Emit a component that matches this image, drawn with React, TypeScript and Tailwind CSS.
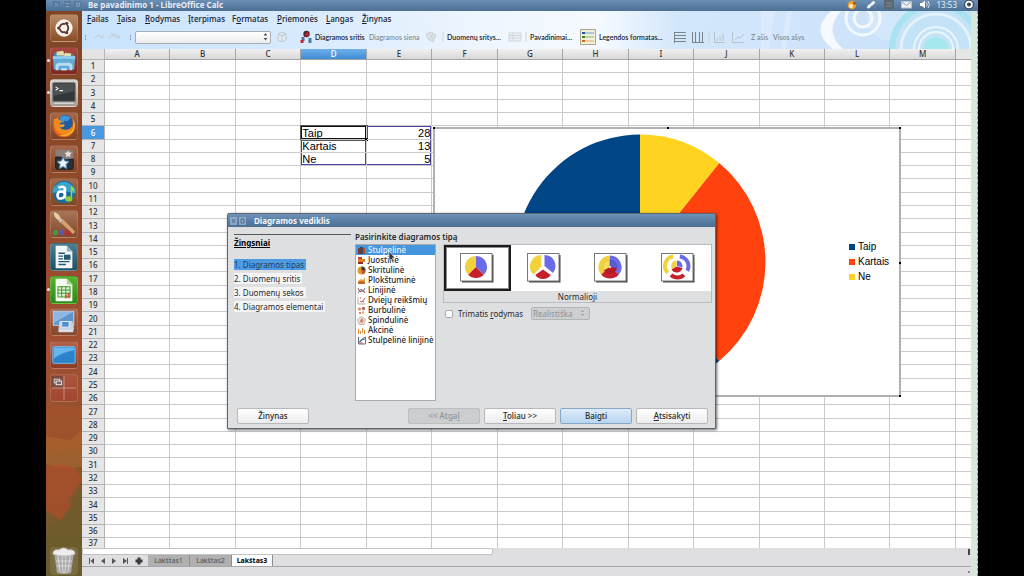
import React from "react";

const COLS = ["A", "B", "C", "D", "E", "F", "G", "H", "I", "J", "K", "L", "M"];
const ROWS = Array.from({ length: 37 }, (_, i) => i + 1);
const DATA: Record<string, string> = { D6: "Taip", E6: "28", D7: "Kartais", E7: "13", D8: "Ne", E8: "5" };

const CELL_MARK: Record<string, string> = {
  D6: "shadow-[inset_0_0_0_1px_#111,0_0_0_1px_#555]",
  D7: "shadow-[inset_1px_0_#4a43a0,inset_-1px_0_#4a43a0]",
  D8: "shadow-[inset_1px_0_#4a43a0,inset_-1px_0_#4a43a0,inset_0_-1px_#4a43a0]",
  E6: "shadow-[inset_-1px_0_#4a43a0,inset_0_1px_#4a43a0]",
  E7: "shadow-[inset_-1px_0_#4a43a0]",
  E8: "shadow-[inset_-1px_0_#4a43a0,inset_0_-1px_#4a43a0]",
};

function rowHeight(r: number) {
  if (r === ROWS.length) return "h-[11px]";
  return r % 7 === 3 || r % 7 === 6 ? "h-[14px]" : "h-[13px]";
}

function sector(cx: number, cy: number, r0: number, r1: number, a0: number, a1: number) {
  const p = (r: number, a: number) => {
    const t = (a * Math.PI) / 180;
    return `${(cx + r * Math.sin(t)).toFixed(2)} ${(cy - r * Math.cos(t)).toFixed(2)}`;
  };
  const large = a1 - a0 > 180 ? 1 : 0;
  const inner = r0 > 0 ? `L${p(r0, a1)}A${r0} ${r0} 0 ${large} 0 ${p(r0, a0)}` : `L${cx} ${cy}`;
  return `M${p(r1, a0)}A${r1} ${r1} 0 ${large} 1 ${p(r1, a1)}${inner}Z`;
}

/** Label with its access key underlined. */
function Key({ text, at }: { text: string; at: number }) {
  return (
    <>
      {text.slice(0, at)}
      <u>{text[at]}</u>
      {text.slice(at + 1)}
    </>
  );
}

/* ---------- launcher ---------- */

const launcher: { name: string; tile: string; running?: boolean; art: React.ReactNode }[] = [
  {
    name: "Dash",
    tile: "from-[#b98a66] to-[#8a4d25]",
    art: (
      <>
        <circle cx="14" cy="14" r="9.3" fill="#f6f1ee" />
        <circle cx="14" cy="14" r="4.6" fill="none" stroke="#5c3a2a" strokeWidth="2" />
        <path d="M14 14L7 14M14 14L17.5 20M14 14L17.5 8" stroke="#f6f1ee" strokeWidth="1.4" />
        <circle cx="8.3" cy="14" r="1.7" fill="#5c3a2a" />
        <circle cx="16.9" cy="9" r="1.7" fill="#5c3a2a" />
        <circle cx="16.9" cy="19" r="1.7" fill="#5c3a2a" />
      </>
    ),
  },
  {
    name: "Failai",
    tile: "from-[#a8483f] to-[#7c2a20]",
    running: true,
    art: (
      <>
        <path d="M3 5h7l2 2h13v6H3z" fill="#3f87b5" />
        <path d="M6 4l7-1 2 5H6zM15 5l7 1-1 4h-7z" fill="#e2dca8" />
        <path d="M2 9q12-1 24 0l-1 14q-11 2-22 0z" fill="#62abd8" />
        <path d="M2 9q12-1 24 0v3q-12-1-24 0z" fill="#8fcbea" />
        <path d="M5 24v-4q0-4 4-4h10q4 0 4 4v4h-3v-3q0-2-2-2h-8q-2 0-2 2v3z" fill="#b9dbee" />
        <path d="M11 22h6v2h-6z" fill="#d6ecf7" />
      </>
    ),
  },
  {
    name: "Terminalas",
    tile: "from-[#d9d3cd] to-[#a39a92]",
    running: true,
    art: (
      <>
        <rect x="2" y="3" width="24" height="20" rx="1" fill="#33373a" stroke="#6d6f70" />
        <path d="M3 4h22v8L3 17z" fill="#4b5053" />
        <path d="M5 7.500l2.500 1.700L5 11M9 11.500h4" stroke="#f3f3f3" strokeWidth="1.200" fill="none" />
        <path d="M3 25h22" stroke="#eee" />
      </>
    ),
  },
  {
    name: "Firefox",
    tile: "from-[#a5694a] to-[#814122]",
    art: (
      <>
        <circle cx="14" cy="14" r="12" fill="#e4601a" />
        <circle cx="15" cy="10.500" r="8.500" fill="#1f5c9e" />
        <path d="M10 4q6-3 11 1l-3 4-3-1-2 3-4-3z" fill="#3f95d6" />
        <path d="M3 6q2 1 4-1 1 3 5 4l-3 3q0 6 7 6 5 0 7-4-1 9-9 10Q2 22 3 6z" fill="#f08a1e" />
        <path d="M24 7q4 8-1 14-6 6-14 3 9 0 13-5 3-4 2-12z" fill="#f8b52c" />
        <path d="M8 13q4-2 7 0-1 3-5 2z" fill="#f8a52c" />
      </>
    ),
  },
  {
    name: "Stardict",
    tile: "from-[#a5694a] to-[#814122]",
    art: (
      <>
        <path d="M5 6q0-2 2-2h15q2 0 2 2v17q0 2-2 2H7q-2 0-2-2z" fill="#8d7d78" />
        <path d="M5 12q7-1 11 3l8-1v9q0 2-2 2H7q-2 0-2-2z" fill="#2b3036" stroke="#14181c" />
        <path d="M18.500 4.500l1.200 2.500 2.800.4-2 1.900.5 2.700-2.500-1.300-2.500 1.300.5-2.700-2-1.900 2.800-.4z" fill="#e6e0e0" />
        <path d="M13 12l1.900 4.100 4.500.6-3.300 3.100.8 4.500-3.900-2.200-3.900 2.200.8-4.500-3.300-3.100 4.500-.6z" fill="#e8f3fb" stroke="#5d93c4" />
      </>
    ),
  },
  {
    name: "Anki",
    tile: "from-[#a5694a] to-[#7a4a26]",
    art: (
      <>
        <circle cx="14" cy="14" r="12" fill="#156a9e" />
        <path d="M3 9q11-12 22 0 2 3 1 7-9-5-24-1-1-3 1-6z" fill="#3ba3cb" />
        <path d="M15 9v12M15 17q0-3.500-4-3.500T7 17.500t4 3.500 4-4M8 9.500q7-3 7 2" fill="none" stroke="#fff" strokeWidth="2.800" />
        <path d="M22 8v13" stroke="#9ad63e" strokeWidth="1.600" />
        <path d="M22 8q4 2 3 7-1-3-3-3z" fill="#9ad63e" />
        <ellipse cx="19" cy="21.500" rx="4" ry="3" fill="#8ccc3a" />
      </>
    ),
  },
  {
    name: "GIMP",
    tile: "from-[#a87458] to-[#84482a]",
    art: (
      <>
        <path d="M3 1q5 1 7 6l-2 3Q3 7 3 1z" fill="#e8cfa2" />
        <path d="M10 7l3 3-3 3-2-3z" fill="#c9c5c0" />
        <path d="M13 9l13 13-2 3-14-13z" fill="#d3a070" />
        <ellipse cx="5" cy="23.500" rx="2.800" ry="3" fill="#3f9a45" />
        <ellipse cx="11.500" cy="23" rx="2.400" ry="3" fill="#5a5cb4" />
        <ellipse cx="18" cy="23.500" rx="3" ry="2.800" fill="#c02a34" />
      </>
    ),
  },
  {
    name: "LibreOffice Writer",
    tile: "from-[#4b7f92] to-[#1d5064]",
    art: (
      <>
        <path d="M5 2h12l6 6v18H5z" fill="#f3f7f8" />
        <path d="M17 2l6 6h-6z" fill="#8db4c2" />
        <path d="M8 10h7M8 13h5M8 16h5M8 19h12M8 22h8" stroke="#255a70" strokeWidth="1.500" />
        <rect x="14" y="11.500" width="7" height="5.500" fill="#255a70" />
      </>
    ),
  },
  {
    name: "LibreOffice Calc",
    tile: "from-[#57b52f] to-[#2b8a15]",
    running: true,
    art: (
      <>
        <path d="M5 2h12l6 6v18H5z" fill="#f5faf2" />
        <path d="M17 2l6 6h-6z" fill="#a6d594" />
        <rect x="7.500" y="10.500" width="13" height="11" fill="#ddefd6" stroke="#3a9424" />
        <path d="M7 14h14M7 17.500h14M11.500 10v12M16 10v12" stroke="#3a9424" />
        <path d="M15 23v-4h2v4M18 23v-6h2v6" fill="#c2562f" />
      </>
    ),
  },
  {
    name: "Remmina",
    tile: "from-[#b06a52] to-[#87452b]",
    art: (
      <>
        <rect x="2.500" y="2.500" width="22" height="15" fill="#5e94cd" stroke="#c8d8e8" />
        <path d="M3 3h21L3 15z" fill="#8bb7e2" />
        <path d="M9 13h14l2 9q-8 3-17 0z" fill="#c4d4e4" />
        <rect x="11.500" y="13.500" width="8" height="6" fill="#4f8ecb" stroke="#e4edf5" />
        <path d="M8 22h16v3H8z" fill="#d8dfe6" />
      </>
    ),
  },
  {
    name: "Darbalaukis",
    tile: "from-[#b5614b] to-[#8a3b26]",
    art: (
      <>
        <rect x="2" y="5" width="24" height="18" rx="1" fill="#2b84cb" stroke="#7cc0ee" />
        <path d="M3 6h22v3Q12 11 3 18z" fill="#67b6ec" />
      </>
    ),
  },
  {
    name: "Darbo sritys",
    tile: "from-[#a9553e] to-[#a24531]",
    art: (
      <>
        <rect x="0" y="1" width="13" height="13" fill="#7d4a40" />
        <path d="M14 1v26M1 14h26" stroke="#d8a99b" strokeWidth=".8" />
        <rect x="3.500" y="4.500" width="6" height="4" fill="none" stroke="#ddd" />
        <rect x="5.500" y="6.500" width="6" height="4" fill="#746a68" stroke="#eee" />
      </>
    ),
  },
];

function Launcher() {
  return (
    <nav
      aria-label="Launcher"
      className="relative flex w-9 shrink-0 flex-col items-center justify-between overflow-hidden bg-gradient-to-b from-[#7d4526] via-[#a34f2f] via-60% to-[#6b5a2c] pt-[3px] pb-px"
    >
      <svg className="absolute inset-0 h-full w-full" viewBox="0 0 36 566" preserveAspectRatio="none" aria-hidden="true">
        <path d="M0 392q20 6 36 4v40q-20 8-36 2z" fill="#b0502c" opacity=".45" />
        <path d="M0 426l24 4 12-10v36q-18 4-36-2z" fill="#b56d2e" opacity=".45" />
        <path d="M0 456q20-3 30 2l6 12-14 20 4 6-12 14-14-10z" fill="#bb4a2a" opacity=".55" />
        <path d="M36 476v90H0v-46q18-8 24-24z" fill="#675d2b" opacity=".5" />
      </svg>
      <ul className="relative flex h-[388px] flex-col justify-between">
        {launcher.map((l) => (
          <li key={l.name} className="relative">
            {l.running && <span className="absolute top-3 -left-[3px] h-[3px] w-[3px] rounded-full bg-[#f3e6de]" />}
            <button
              type="button"
              aria-label={l.name}
              className={`block h-7 w-7 rounded-sm border border-white/15 bg-gradient-to-b ${l.tile}`}
            >
              <svg viewBox="0 0 28 28" className="h-full w-full">
                {l.art}
              </svg>
            </button>
          </li>
        ))}
      </ul>
      <button type="button" aria-label="Šiukšlinė" className="relative h-7 w-7 rounded-sm bg-white/10">
        <svg viewBox="0 0 28 28" className="h-full w-full">
          <path d="M4 5h20l-3 21q-7 2-14 0z" fill="#a9a9a9" />
          <path d="M8 9l2 16M12 9l1 17M16 9l-1 17M20 9l-2 16M6 14h16M7 19h14" stroke="#e3e3e3" strokeWidth=".8" />
          <path d="M3 7q0-5 6-4 5-4 9 0 7-1 7 4-11 4-22 0z" fill="#eeeeee" stroke="#c5c5c5" />
        </svg>
      </button>
    </nav>
  );
}

/* ---------- title bar, menu, toolbar ---------- */

function TitleBar() {
  return (
    <header className="flex h-[11px] shrink-0 items-start gap-1 bg-gradient-to-b from-[#6c90b6] to-[#4c6f92] pr-1 pl-[6px] text-[#e4edf6]">
      <svg viewBox="0 0 32 10" className="h-[10px] w-8 text-[#86a3c2]" aria-hidden="true">
        <path d="M1 1h7v7H1zM12 1h7v7h-7zM22 1h7v7h-7z" fill="#58799d" />
        <path d="M3 3l3 3M6 3L3 6M13.500 3.500h4M13.500 6.500h4M24.500 3h3v3h-3z" stroke="currentColor" fill="none" />
      </svg>
      <h1 className="flex-1 text-[8px] leading-[9px] font-bold whitespace-nowrap">Be pavadinimo 1 - LibreOffice Calc</h1>
      <div className="flex items-start gap-[7px]">
        <svg viewBox="0 0 12 10" className="h-[10px] w-3">
          <circle cx="6" cy="5" r="4.300" fill="#e8a02c" />
          <circle cx="5" cy="6" r="2.200" fill="#f7e3b4" />
          <path d="M7 2l4 1-3 2z" fill="#7b4310" />
        </svg>
        <svg viewBox="0 0 12 10" className="h-[10px] w-3">
          <path d="M3.500 7l1.500-1.500M7 4l1.500-1.500" stroke="#f2f5f8" strokeWidth="3" strokeLinecap="round" />
        </svg>
        <svg viewBox="0 0 10 10" className="h-[10px] w-[10px]">
          <rect width="10" height="9" fill="#5b6670" />
          <path d="M2 3h6M2 6h6" stroke="#7f8c98" />
        </svg>
        <svg viewBox="0 0 11 10" className="h-[10px] w-[11px]">
          <rect x="0.500" y="1.500" width="10" height="6.500" fill="#eef1f4" stroke="#b9c3cd" />
          <path d="M1 2l4.500 3.500L10 2" stroke="#8e9dab" fill="none" />
        </svg>
        <svg viewBox="0 0 11 10" className="h-[10px] w-[11px]">
          <path d="M1 3h2L6 .5v8L3 6H1z" fill="#fff" />
          <path d="M7.500 2.500q1.500 2 0 4M9 1q3 3.500 0 7" stroke="#dfe7ee" fill="none" />
        </svg>
        <time className="text-[8px] leading-[9px]">13:53</time>
        <svg viewBox="0 0 11 11" className="h-[10px] w-[10px]">
          <circle cx="5.500" cy="5" r="5.400" fill="#37475a" />
          <circle cx="5.500" cy="5" r="3.200" fill="none" stroke="#fff" strokeWidth="2" />
        </svg>
      </div>
    </header>
  );
}

const MENU: [string, number, string][] = [
  ["Failas", 0, "w-[30px]"],
  ["Taisa", 0, "w-7"],
  ["Rodymas", 0, "w-[43px]"],
  ["Įterpimas", 0, "w-11"],
  ["Formatas", 1, "w-[45px]"],
  ["Priemonės", 0, "w-[49px]"],
  ["Langas", 0, "w-9"],
  ["Žinynas", 0, "w-10"],
];

function ToolText({ w, off, children }: { w: string; off?: boolean; children: React.ReactNode }) {
  return (
    <button
      type="button"
      disabled={off}
      className={`shrink-0 text-left font-['Lato','Noto_Sans',sans-serif] text-[7px] leading-[10px] whitespace-nowrap ${w} ${off ? "font-medium text-[#7d858c]" : "font-semibold text-[#1d2228]"}`}
    >
      {children}
    </button>
  );
}

function Toolbar() {
  return (
    <div role="toolbar" aria-label="Diagrama" className="flex h-[22px] items-center pb-[2px] pl-[3px]">
      <svg viewBox="0 0 50 14" className="h-[14px] w-[50px] shrink-0" aria-hidden="true">
        <path d="M0 6h1M0 9h1M45 6h1M45 9h1" stroke="#56606b" />
        <path d="M10 8q3-5 7 0M18 5v3h-3M31 8q-3-5-7 0M26 4q6 0 8 4M34 5v3h-3" stroke="#c3ccd6" fill="none" strokeWidth="1.200" />
      </svg>
      <select aria-label="Diagramos elementas" className="h-[13px] w-[136px] shrink-0 appearance-none rounded-xs border border-[#a6adb4] bg-gradient-to-b from-white to-[#ececec] text-[7px]">
        <option></option>
      </select>
      <svg viewBox="0 0 8 10" className="pointer-events-none -ml-2 h-[10px] w-2 shrink-0" aria-hidden="true">
        <path d="M.5 3.500h4L2.500 1zM.5 6h4l-2 2.500z" fill="#555" />
      </svg>
      <button type="button" aria-label="Formatuoti" disabled className="w-[27px] shrink-0 pl-[5px]">
        <svg viewBox="0 0 12 12" className="h-3 w-3">
          <path d="M2 3l4-2 4 2v6l-4 2-4-2zM2 3l4 2 4-2M6 5v6" fill="#e3e9ef" stroke="#c0c8d0" />
        </svg>
      </button>
      <svg viewBox="0 0 14 14" className="h-[14px] w-[17px] shrink-0" aria-hidden="true">
        <path d="M2 11V7h3v4z" fill="#5b6f96" />
        <circle cx="7" cy="4" r="3.200" fill="#53222a" />
        <path d="M5 4l3-2 2 3-2 2z" fill="#b02d34" />
        <path d="M1 10h3v3H1z" fill="#c22b32" />
        <path d="M9 8h3v5H9z" fill="#4c79a8" />
      </svg>
      <ToolText w="w-[54px]">Diagramos sritis</ToolText>
      <ToolText w="w-[56px]" off>Diagramos siena</ToolText>
      <svg viewBox="0 0 22 12" className="h-3 w-[22px] shrink-0" aria-hidden="true">
        <path d="M1 3l5-2 5 3-3 7-5-3z" fill="#dde2e7" stroke="#c9d0d7" />
        <path d="M4 3l4 5M8 3L5 8" stroke="#c9d0d7" />
        <path d="M18 1v10" stroke="#ccd3da" />
      </svg>
      <ToolText w="w-[61px]">Duomenų sritys...</ToolText>
      <svg viewBox="0 0 22 12" className="h-3 w-[22px] shrink-0" aria-hidden="true">
        <path d="M1 2h12v8H1zM1 4.500h12M5 2v8M1 7h12" fill="#edf1f4" stroke="#ced5db" />
        <path d="M18 1v10" stroke="#ccd3da" />
      </svg>
      <ToolText w="w-[50px]">Pavadinimai...</ToolText>
      <button type="button" aria-label="Legenda" className="mr-[3px] h-4 w-4 shrink-0 border border-[#aba792] bg-[#f2efdb]">
        <svg viewBox="0 0 14 14" className="h-full w-full">
          <path d="M3 3h10" stroke="#6f98cc" />
          <path d="M3 7h10" stroke="#7fbb6c" />
          <path d="M3 11h10" stroke="#e8a868" />
          <path d="M1 2h3v2H1z" fill="#23549b" />
          <path d="M1 6h3v2H1z" fill="#3c8c26" />
          <path d="M1 10h3v2H1z" fill="#d06a1e" />
        </svg>
      </button>
      <ToolText w="w-[74px]">Legendos formatas...</ToolText>
      <svg viewBox="0 0 78 14" className="h-[14px] w-[78px] shrink-0" fill="none" aria-hidden="true">
        <path d="M1.500 2v11M1 2.500h12M1 5.500h12M1 8.500h12M1 11.500h12" stroke="#7b838b" />
        <path d="M19 12.500h12M19.500 2v10M22.500 2v10M26.500 2v10M29.500 2v10" stroke="#7b838b" />
        <path d="M36 1v12" stroke="#ccd3da" />
        <path d="M41.500 2v10.500h10M44 11V8M47 11V6M50 11V4M59.500 2v10.500h12M62 10l3-3 2 1 4-4" stroke="#b8c0c8" />
      </svg>
      <ToolText w="w-[22px]" off>Z ašis</ToolText>
      <ToolText w="w-10" off>Visos ašys</ToolText>
    </div>
  );
}

function Head() {
  return (
    <div className="relative h-[38px] shrink-0 overflow-hidden bg-[linear-gradient(90deg,#c9e3fd_0%,#d8eafd_25%,#eef6fe_45%,#f6faff_58%,#d3e7fb_67%,#cfe4fb_85%,#c3e0f8_100%)] text-[#17202a]">
      <svg className="absolute top-0 right-0 h-full w-[210px]" viewBox="0 0 210 38" fill="none" aria-hidden="true">
        <path d="M0 0h14L8 38H0zM26 0h5l-6 38h-5z" fill="#dbeafc" />
        <path d="M70 0q-22 20 2 38h10q-20-18-2-38z" fill="#fff" opacity=".8" />
        <circle cx="130" cy="6" r="24" fill="#deeefc" opacity=".5" />
        <circle cx="102" cy="7" r="17" stroke="#f3f9ff" strokeWidth="3" />
        <circle cx="102" cy="7" r="9" stroke="#f3f9ff" strokeWidth="3" />
        <circle cx="175" cy="38" r="44" fill="#c4e3f7" stroke="#a9e2f0" strokeWidth="6" />
        <circle cx="175" cy="38" r="35" stroke="#e3f3fd" strokeWidth="3" />
        <circle cx="175" cy="38" r="22" stroke="#e9f7fd" strokeWidth="2" />
        <circle cx="175" cy="38" r="17" stroke="#e9f7fd" strokeWidth="2" />
        <circle cx="175" cy="38" r="12" fill="#a5e8ee" />
      </svg>
      <div className="relative">
        <nav aria-label="Meniu" className="flex h-4 items-center pl-[5px]">
          {MENU.map(([t, i, w]) => (
            <button key={t} type="button" className={`text-left text-[8px] leading-[12px] font-medium whitespace-nowrap ${w}`}>
              <Key text={t} at={i} />
            </button>
          ))}
        </nav>
        <Toolbar />
      </div>
    </div>
  );
}

/* ---------- sheet ---------- */

function Sheet() {
  return (
    <table className="w-full table-fixed border-separate border-spacing-0 text-[#333]">
      <thead>
        <tr className="h-[11px]">
          <th className="w-[23px] border-r border-b border-[#b4b4b4] bg-[#e3e3e3] p-0" />
          {COLS.map((c) => (
            <th
              key={c}
              scope="col"
              className={`border-r border-b border-[#a5a5a5] p-0 text-[8px] leading-[10px] font-medium ${c === "D" ? "bg-gradient-to-b from-[#6fb0ea] to-[#3f8cd6] text-white" : "bg-gradient-to-b from-[#f0f0f0] to-[#d9d9d9]"}`}
            >
              {c}
            </th>
          ))}
          <th className="w-[15px] border-b border-[#a5a5a5] bg-[#e6e6e6] p-0" />
        </tr>
      </thead>
      <tbody>
        {ROWS.map((r) => (
          <tr key={r} className={rowHeight(r)}>
            <th
              scope="row"
              className={`border-r border-b border-[#b4b4b4] p-0 text-[8px] leading-[10px] font-medium ${r === 6 ? "bg-[#4a98df] text-white" : "bg-[#e6e6e6]"}`}
            >
              {r}
            </th>
            {COLS.map((c) => (
              <td
                key={c}
                className={`relative border-r border-b border-[#cbcbcb] px-px py-0 font-['Liberation_Sans',sans-serif] text-[11px] leading-[12px] text-black ${c === "E" ? "text-right" : "text-left"} ${CELL_MARK[c + r] ?? ""}`}
              >
                {DATA[c + r]}
                {c + r === "D6" && <span className="absolute -right-0.5 -bottom-0.5 h-[3px] w-[3px] bg-black" />}
              </td>
            ))}
            <td className="border-b border-[#cbcbcb] p-0" />
          </tr>
        ))}
      </tbody>
    </table>
  );
}

const SERIES = [
  { name: "Taip", color: "#004586", dot: "bg-[#004586]", from: 140.87, to: 360 },
  { name: "Kartais", color: "#ff420e", dot: "bg-[#ff420e]", from: 39.13, to: 140.87 },
  { name: "Ne", color: "#ffd320", dot: "bg-[#ffd320]", from: 0, to: 39.13 },
];

const HANDLES = [
  "-top-0.5 -left-0.5",
  "-top-0.5 left-1/2",
  "-top-0.5 -right-0.5",
  "top-1/2 -right-0.5",
  "-right-0.5 -bottom-0.5",
];

function SheetChart() {
  return (
    <figure className="absolute top-[78px] left-[351px] flex h-[270px] w-[468px] items-center border-2 border-[#b0b0b0] bg-white font-['Liberation_Sans',sans-serif]">
      {HANDLES.map((h) => (
        <span key={h} className={`absolute h-[2px] w-[2px] bg-black ${h}`} />
      ))}
      <svg
        viewBox="0 0 252 252"
        preserveAspectRatio="none"
        className="ml-[79px] h-[256px] w-[252px] shrink-0"
        role="img"
        aria-label="Skritulinė diagrama"
      >
        {SERIES.map((s) => (
          <path key={s.name} d={sector(126, 126, 0, 125.5, s.from, s.to)} fill={s.color} />
        ))}
      </svg>
      <figcaption className="ml-[83px] flex flex-col gap-[3px]">
        {SERIES.map((s) => (
          <span key={s.name} className="flex items-center gap-[3px] text-[10px] leading-[12px] text-black">
            <span className={`h-[6px] w-[6px] ${s.dot}`} />
            {s.name}
          </span>
        ))}
      </figcaption>
    </figure>
  );
}

function Footer() {
  return (
    <footer className="shrink-0 bg-[#dfdfe1]">
      <div className="flex h-[7px] items-center justify-between pr-px">
        <div className="h-[7px] w-[411px] rounded-r-xs border border-[#c2c2c2] bg-white" />
        <span className="h-[6px] w-[2px] bg-[#444]" />
      </div>
      <div className="flex h-[12px] items-center border-b border-[#a8a8aa] pl-[6px]">
        <svg viewBox="0 0 60 10" className="h-[10px] w-[60px]" fill="#565656" role="img" aria-label="Lapų naršymas">
          <path d="M1 2h1v6H1zM6 2v6L2.500 5zM17 2v6l-4-3zM24 2v6l4-3zM35 2v6l4-3zM39 2h1v6h-1z" />
          <path d="M49.500 1.500h3v2h2v3h-2v2h-3v-2h-2v-3h2z" fill="#3a3a3a" />
        </svg>
        <div role="tablist" className="flex text-[7px] leading-[11px]">
          {["Lakštas1", "Lakštas2", "Lakštas3"].map((t, i) => (
            <button
              key={t}
              type="button"
              role="tab"
              aria-selected={i === 2}
              className={`h-[11px] border-r border-[#8d8d8d] ${i === 2 ? "w-[41px] bg-white font-bold text-black" : "w-[42px] bg-[#b0b0b0] text-[#4e4e4e]"}`}
            >
              {t}
            </button>
          ))}
        </div>
      </div>
      <div className="flex h-[9px] items-center justify-end pr-[1px]">
        <span className="h-[2px] w-[2px] bg-[#888]" />
      </div>
    </footer>
  );
}

/* ---------- wizard ---------- */

const TYPES: { name: string; icon: React.ReactNode }[] = [
  {
    name: "Stulpelinė",
    icon: (
      <>
        <path d="M1 2h2v6H1z" fill="#8f3324" />
        <path d="M3 1h3v7H3z" fill="#4a4450" />
        <path d="M6 2h2v6H6z" fill="#b4522b" />
      </>
    ),
  },
  {
    name: "Juostinė",
    icon: (
      <>
        <path d="M1 1h4v2H1z" fill="#c23a2a" />
        <path d="M1 3h7v3H1z" fill="#de7f2c" />
        <path d="M1 6h5v2H1z" fill="#8c2c22" />
      </>
    ),
  },
  {
    name: "Skritulinė",
    icon: (
      <>
        <circle cx="4.500" cy="4.500" r="4" fill="#e39a2d" />
        <path d="M4.500 4.500V.5a4 4 0 0 1 4 4z" fill="#3a3a44" />
        <path d="M4.500 4.500h4a4 4 0 0 1-3 3.900z" fill="#b9502a" />
      </>
    ),
  },
  {
    name: "Plokštuminė",
    icon: (
      <>
        <path d="M1 8V5l3-2 2 1 2-3v7z" fill="#e9a13c" />
        <path d="M1 8V6l4-1 3 1v2z" fill="#c2652a" />
      </>
    ),
  },
  {
    name: "Linijinė",
    icon: (
      <>
        <path d="M1 2l2 4 3-2 2 3" stroke="#b13a33" fill="none" />
        <path d="M1 7l3-4 2 3 2-4" stroke="#6c7f9f" fill="none" />
      </>
    ),
  },
  {
    name: "Dviejų reikšmių",
    icon: (
      <>
        <path d="M1 1v7h7" stroke="#b8a9a4" fill="none" />
        <path d="M3 5l2 1 3-4M3 2h1M6 6h1" stroke="#c65347" fill="none" />
      </>
    ),
  },
  {
    name: "Burbulinė",
    icon: (
      <>
        <circle cx="2.500" cy="3" r="1.500" fill="#d98a4e" />
        <circle cx="6.500" cy="2.500" r="1.700" fill="#a07062" />
        <circle cx="3" cy="7" r="1" fill="#c65347" />
        <circle cx="6" cy="6.500" r="1.200" fill="#e3a95d" />
      </>
    ),
  },
  {
    name: "Spindulinė",
    icon: (
      <>
        <path d="M4.500.5l4 3-1.500 5H2L.5 3.500z" fill="#efe3df" stroke="#c9b3ad" />
        <path d="M4.500 2l2 2-1 3-3-1z" fill="#c98a72" />
      </>
    ),
  },
  {
    name: "Akcinė",
    icon: <path d="M1.500 3v5M3.500 5v3M5.500 2v5M7.500 4v4" stroke="#e08c3a" fill="none" />,
  },
  {
    name: "Stulpelinė linijinė",
    icon: (
      <>
        <path d="M1.500 1v7h7V1L5 3 2 6" stroke="#5f6f8a" fill="none" />
        <path d="M3 6l2-2 3-1" stroke="#3b6fae" fill="none" />
        <path d="M2 7h4" stroke="#c65347" />
      </>
    ),
  },
];

const Y = "#f2d23c";
const B = "#6b6bea";
const R = "#c5202b";

const VARIANTS: { name: string; art: React.ReactNode }[] = [
  {
    name: "Normalioji",
    art: (
      <>
        <path d={sector(16, 14, 0, 11, 225, 360)} fill={Y} />
        <path d={sector(16, 14, 0, 11, 0, 135)} fill={B} />
        <path d={sector(16, 14, 0, 11, 135, 225)} fill={R} />
      </>
    ),
  },
  {
    name: "Išskleistas skritulys",
    art: (
      <>
        <path d={sector(14.5, 13.5, 0, 11.5, 225, 358)} fill={Y} />
        <path d={sector(17.5, 13, 0, 11, 0, 130)} fill={B} />
        <path d={sector(16, 16.5, 0, 9.5, 125, 235)} fill={R} />
      </>
    ),
  },
  {
    name: "Žiedas",
    art: (
      <>
        <path d={sector(16, 14, 0, 11.5, 230, 360)} fill={Y} />
        <path d={sector(16, 14, 0, 11.5, 0, 130)} fill={B} />
        <path d={sector(16, 14, 0, 11.5, 130, 230)} fill={R} />
        <path d={sector(16, 14, 0, 7, 240, 360)} fill="#f6dc5c" stroke="#d9b22e" strokeWidth=".5" />
        <path d={sector(16, 14, 0, 7, 0, 100)} fill="#5a5ad2" stroke="#4b4bb8" strokeWidth=".5" />
        <path d={sector(16, 14, 0, 7, 100, 240)} fill="#b51a25" />
        <circle cx="16" cy="14" r="1.200" fill="#e4cfc4" />
      </>
    ),
  },
  {
    name: "Išskleistas žiedas",
    art: (
      <>
        <path d={sector(13.5, 13, 7.5, 11.5, 225, 352)} fill={Y} />
        <path d={sector(18, 13, 7.5, 11.5, 5, 120)} fill={B} />
        <path d={sector(16.5, 15.5, 7, 11, 135, 225)} fill={R} />
        <path d={sector(15.5, 13, 0, 5.5, 235, 360)} fill={Y} />
        <path d={sector(16, 13, 0, 5.5, 0, 105)} fill={B} />
        <path d={sector(15.7, 13.5, 0, 6, 105, 240)} fill={R} />
      </>
    ),
  },
];

const STEPS = ["1. Diagramos tipas", "2. Duomenų sritis", "3. Duomenų sekos", "4. Diagramos elementai"];

const btn = "h-4 w-[72px] shrink-0 rounded-xs border text-[8px] leading-[12px] font-medium";
const btnPlain = "border-[#b8b8bb] bg-gradient-to-b from-white to-[#ececee]";

function Wizard() {
  return (
    <div
      role="dialog"
      aria-label="Diagramos vediklis"
      className="absolute top-[213px] left-[181px] flex h-[216px] w-[489px] flex-col rounded-t-xs border border-[#5f6670] bg-[#dedfe1] text-[#26282b] shadow-[1px_1px_3px_rgba(0,0,0,0.6)]"
    >
      <div className="flex h-[13px] items-center gap-2 bg-gradient-to-b from-[#6d92b8] to-[#4b6e92] pl-[2px] text-[#f3f7fb]">
        <svg viewBox="0 0 16 8" className="h-2 w-4" aria-hidden="true">
          <path d="M0 0h7v8H0zM9 0h7v8H9z" fill="#8ca8c5" />
          <path d="M2 2l3 4M5 2L2 6M11 2h3v4h-3z" stroke="#4d6f93" fill="none" />
        </svg>
        <h2 className="text-[8px] leading-[12px] font-bold">Diagramos vediklis</h2>
      </div>

      <div className="flex flex-1 pt-1 pl-[6px]">
        <section className="mt-[3px] w-[117px] border-t border-[#55585c]">
          <h3 className="mt-[2px] text-[8px] leading-[12px] font-bold text-black underline">Žingsniai</h3>
          <ol className="mt-[10px] flex flex-col items-start gap-[3px] text-[8px] leading-[11px]">
            {STEPS.map((s, i) => (
              <li key={s} className={`pr-[2px] whitespace-nowrap ${i === 0 ? "bg-[#4f9be2] text-[#1c3e66]" : "bg-[#f4f4f5]"}`}>
                {s}
              </li>
            ))}
          </ol>
        </section>

        <section className="ml-1 w-[81px]">
          <h3 className="text-[8px] leading-[12px] font-semibold whitespace-nowrap">Pasirinkite diagramos tipą</h3>
          <ul role="listbox" aria-label="Diagramos tipas" className="mt-px h-[157px] border border-[#a9aaad] bg-white text-[8px] leading-[10px] font-medium">
            {TYPES.map((t, i) => (
              <li
                key={t.name}
                role="option"
                aria-selected={i === 0}
                className={`flex h-[10px] items-center gap-[2px] pl-px whitespace-nowrap ${i === 0 ? "bg-[#4596de] text-[#eaf4fd]" : ""}`}
              >
                <svg viewBox="0 0 9 9" className="h-[9px] w-[9px] shrink-0" aria-hidden="true">
                  {t.icon}
                </svg>
                {t.name}
              </li>
            ))}
          </ul>
        </section>

        <section className="mt-[13px] ml-[7px] flex w-[269px] flex-col">
          <div className="border border-[#bbbcbf]">
            <div className="grid h-[46px] grid-cols-4 bg-white">
              {VARIANTS.map((v, i) => (
                <button
                  key={v.name}
                  type="button"
                  aria-label={v.name}
                  aria-pressed={i === 0}
                  className={`flex items-center justify-center ${i === 0 ? "border-2 border-[#1c1c1c] shadow-[inset_0_0_0_1px_#8b8b8b]" : ""}`}
                >
                  <svg viewBox="0 0 34 30" className="h-[30px] w-[34px]">
                    <path d="M2 2h31.500v27.500H2z" fill="#444" />
                    <rect x=".5" y=".5" width="31.500" height="27.500" fill="#fff" stroke="#777" />
                    {v.art}
                  </svg>
                </button>
              ))}
            </div>
            <p className="text-center text-[8px] leading-[11px]">Normalioji</p>
          </div>
          <div className="mt-1 flex items-center text-[8px] leading-[12px]">
            <input id="view3d" type="checkbox" className="ml-[2px] h-2 w-2 appearance-none rounded-xs border border-[#a9aaad] bg-white" />
            <label htmlFor="view3d" className="w-[78px] pl-[5px] whitespace-nowrap">
              <Key text="Trimatis rodymas" at={9} />
            </label>
            <div className="relative">
              <select
                aria-label="Trimačio rodymo schema"
                disabled
                className="block h-[13px] w-[59px] appearance-none rounded-xs border border-[#b3b4b6] bg-[#cecfd1] pl-px text-[8px] leading-[10px] text-[#8e9093] opacity-100"
              >
                <option>Realistiška</option>
              </select>
              <svg viewBox="0 0 6 8" className="pointer-events-none absolute top-[2px] right-1 h-2 w-[6px]" aria-hidden="true">
                <path d="M1 3h3L2.500 1zM1 5h3L2.500 7z" fill="#999b9e" />
              </svg>
            </div>
          </div>
        </section>
      </div>

      <div className="flex justify-between pr-[7px] pb-1 pl-[9px]">
        <button type="button" className={`${btn} ${btnPlain}`}>Žinynas</button>
        <div className="flex gap-1">
          <button type="button" disabled className={`${btn} border-[#bcbdbf] bg-[#cccdcf] text-[#909295]`}>
            <Key text="<< Atgal" at={7} />
          </button>
          <button type="button" className={`${btn} ${btnPlain}`}>
            <Key text="Toliau >>" at={0} />
          </button>
          <button type="button" className={`${btn} border-[#86a8c8] bg-gradient-to-b from-[#deecf9] to-[#b9d5f0]`}>
            Baigti
          </button>
          <button type="button" className={`${btn} ${btnPlain}`}>
            <Key text="Atsisakyti" at={0} />
          </button>
        </div>
      </div>

      <svg viewBox="0 0 8 12" className="pointer-events-none absolute top-[37px] left-[160px] h-3 w-2" aria-hidden="true">
        <path d="M1 0l6 7H4.500l1.500 4-1.500.6L3 8 1 9.500z" fill="#333" stroke="#eee" strokeWidth=".7" />
      </svg>
    </div>
  );
}

export default function App() {
  return (
    <div className="flex h-screen bg-black px-[46px] font-['Noto_Sans','Open_Sans',sans-serif]">
      <div className="relative flex min-w-0 flex-1 flex-col overflow-hidden">
        <TitleBar />
        <div className="flex min-h-0 flex-1">
          <Launcher />
          <main className="flex min-w-0 flex-1">
            <div className="flex min-w-0 flex-1 flex-col">
              <Head />
              <div className="relative min-h-0 flex-1 overflow-hidden bg-white">
                <Sheet />
                <SheetChart />
              </div>
              <Footer />
            </div>
            <div className="w-[7px] border-r border-dashed border-[#7f9f8e] bg-[#d5e8da]" />
          </main>
        </div>
        <Wizard />
      </div>
    </div>
  );
}
